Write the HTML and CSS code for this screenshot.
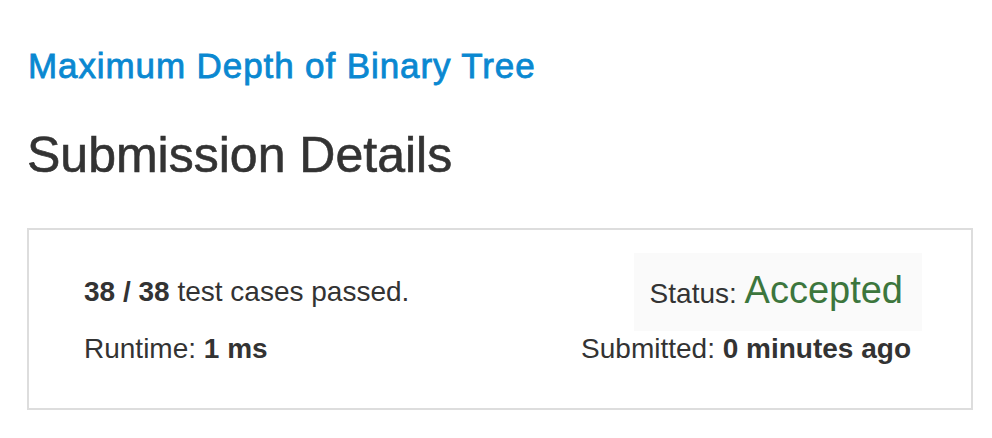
FILE: index.html
```html
<!DOCTYPE html>
<html>
<head>
<meta charset="utf-8">
<link rel="stylesheet" href="styles.css">
</head>
<body>
<div class="page">
  <a class="problem-link" href="#">Maximum Depth of Binary Tree</a>
  <h1 class="title">Submission Details</h1>
  <div class="panel">
    <div class="row row-top">
      <div class="cell"><strong>38 / 38</strong> test cases passed.</div>
      <div class="status">Status: <span class="accepted">Accepted</span></div>
    </div>
    <div class="row row-bottom">
      <div class="cell">Runtime: <strong>1 ms</strong></div>
      <div class="cell submitted">Submitted: <strong>0 minutes ago</strong></div>
    </div>
  </div>
</div>
</body>
</html>
```

FILE: styles.css
```css
html, body {
  margin: 0;
  padding: 0;
  background: #ffffff;
}
body {
  font-family: "Liberation Sans", Arial, Helvetica, sans-serif;
  color: #333333;
}
.page {
  padding: 46px 19px 0 27px;
}
.problem-link {
  display: block;
  margin-left: 1px;
  font-size: 35px;
  line-height: 40px;
  letter-spacing: 0.9px;
  color: #0a88d1;
  text-decoration: none;
  -webkit-text-stroke: 0.8px #0a88d1;
}
.title {
  margin: 41px 0 0 0;
  font-size: 50px;
  line-height: 56px;
  font-weight: normal;
  -webkit-text-stroke: 0.6px #333333;
}
.panel {
  margin-top: 45px;
  border: 2px solid #dddddd;
  padding: 23px 49px 43px 55px;
}
.row {
  display: flex;
  justify-content: space-between;
  align-items: center;
  font-size: 28px;
  line-height: 32px;
}
.row-bottom {
  margin-top: 2px;
}
.status {
  background: #fafafa;
  padding: 0 19px 0 16px;
  line-height: 74px;
}
.accepted {
  color: #3c763d;
  font-size: 38px;
}
.submitted {
  margin-right: 11px;
}
strong {
  font-weight: bold;
}
```
